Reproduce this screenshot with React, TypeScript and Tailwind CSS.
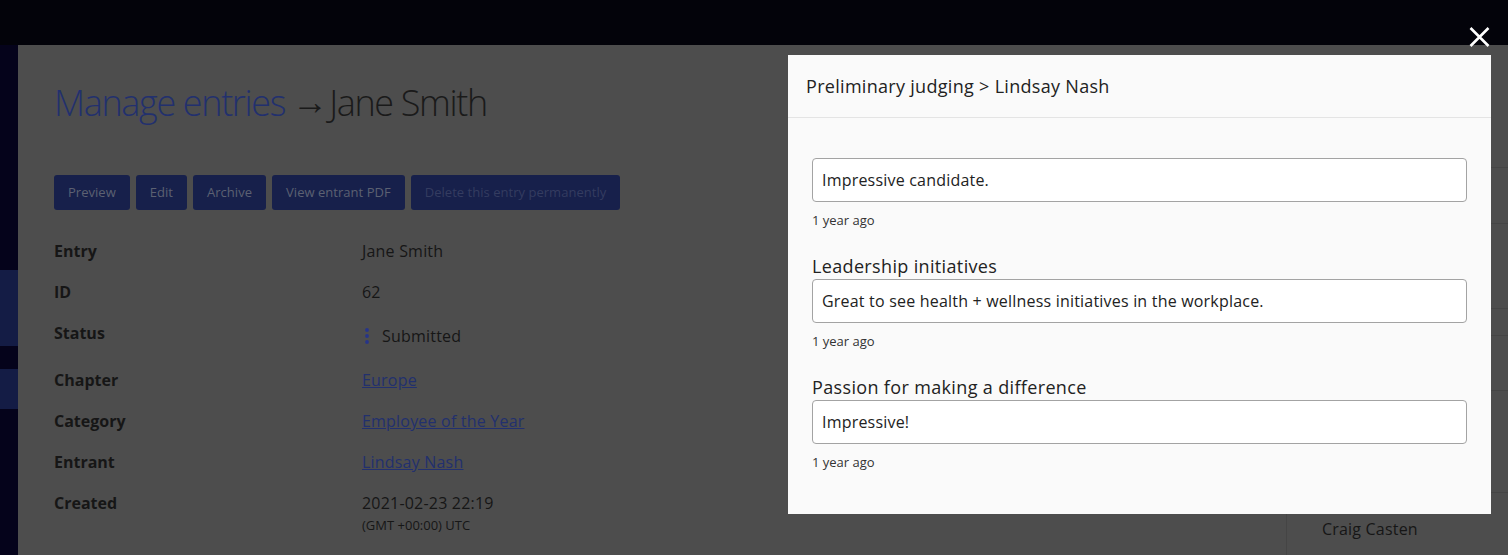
const details = [
  { label: "Entry", value: "Jane Smith" },
  { label: "ID", value: "62" },
];

const links = [
  { label: "Chapter", value: "Europe" },
  { label: "Category", value: "Employee of the Year" },
  { label: "Entrant", value: "Lindsay Nash" },
];

const comments = [
  { title: "", text: "Impressive candidate." },
  { title: "Leadership initiatives", text: "Great to see health + wellness initiatives in the workplace." },
  { title: "Passion for making a difference", text: "Impressive!" },
];

function Btn({ children, disabled }: { children: string; disabled?: boolean }) {
  return (
    <span
      className={`h-[35px] px-[14px] rounded-[3px] bg-[#17204b] flex items-center text-[13px] tracking-[0.03px] ${
        disabled ? "text-[#343c60]" : "text-[#5c6172]"
      }`}
    >
      {children}
    </span>
  );
}

export default function App() {
  return (
    <div className="relative w-[1508px] h-[555px] overflow-hidden bg-[#4d4d4d] font-['Open_Sans',sans-serif]">
      <div className="h-[45px] bg-[#03030a]" />
      <div className="flex h-[510px]">
        {/* sidebar */}
        <div className="w-[18px] bg-[#05031b] flex flex-col">
          <div className="h-[225px]" />
          <div className="h-[76px] bg-[#141c45]" />
          <div className="h-[23px]" />
          <div className="h-[40px] bg-[#141c45]" />
        </div>

        {/* main */}
        <div className="flex-1 pl-[36px] pt-[36px]">
          <h1 className="flex text-[36px] leading-[43px] font-light text-[#1a1a1a] tracking-[-1.35px]">
            <span className="text-[#22306e]">Manage entries</span>
            <span className="ml-[7px] mr-[1px] tracking-normal -translate-y-[2px]">→</span>
            <span>Jane Smith</span>
          </h1>

          <div className="mt-[51px] flex gap-[6px]">
            <Btn>Preview</Btn>
            <Btn>Edit</Btn>
            <Btn>Archive</Btn>
            <Btn>View entrant PDF</Btn>
            <Btn disabled>Delete this entry permanently</Btn>
          </div>

          <div className="mt-[29px] text-[16px] text-[#161616] tracking-[0.2px]">
            {details.map((d) => (
              <div key={d.label} className="flex h-[24px] leading-[24px] mb-[17px]">
                <span className="w-[308px] font-bold tracking-normal">{d.label}</span>
                <span>{d.value}</span>
              </div>
            ))}
            <div className="flex h-[30px] mb-[17px]">
              <span className="w-[308px] font-bold tracking-normal leading-[24px]">Status</span>
              <span className="flex items-center gap-[12px] pl-[2px]">
                <svg width="6" height="16" viewBox="0 0 6 16">
                  <circle cx="3" cy="2" r="1.9" fill="#26348a" />
                  <circle cx="3" cy="8" r="1.9" fill="#26348a" />
                  <circle cx="3" cy="14" r="1.9" fill="#26348a" />
                </svg>
                Submitted
              </span>
            </div>
            {links.map((d) => (
              <div key={d.label} className="flex h-[24px] leading-[24px] mb-[17px]">
                <span className="w-[308px] font-bold tracking-normal">{d.label}</span>
                <a href="#" className="underline text-[#22306e]">
                  {d.value}
                </a>
              </div>
            ))}
            <div className="flex">
              <span className="w-[308px] font-bold tracking-normal leading-[24px]">Created</span>
              <div>
                <div className="leading-[24px]">2021-02-23 22:19</div>
                <div className="text-[13px] leading-[18px] tracking-normal mt-[1px]">(GMT +00:00) UTC</div>
              </div>
            </div>
          </div>
        </div>

        {/* table behind modal */}
        <div className="w-[222px] flex flex-col">
          <div className="h-[123px] border-b border-[#454545]" />
          <div className="h-[56px] border-b border-[#454545]" />
          <div className="h-[85px] border-b border-[#454545]" />
          <div className="h-[27px] border-b border-[#454545]" />
          <div className="h-[55px] border-b border-[#454545]" />
          <div className="h-[102px] border-b border-[#454545]" />
          <div className="flex-1 border-l border-[#454545] pl-[35px] pt-[24px] text-[16px] tracking-[0.2px] text-[#161616]">
            Craig Casten
          </div>
        </div>
      </div>

      {/* close */}
      <button className="absolute left-[1469px] top-[27px] w-[21px] h-[20px]">
        <svg width="21" height="20" viewBox="0 0 21 20">
          <path d="M1.5 1 L19.5 19 M19.5 1 L1.5 19" stroke="#fff" strokeWidth="2.6" />
        </svg>
      </button>

      {/* modal */}
      <div className="absolute left-[788px] top-[55px] w-[703px] h-[459px] bg-[#fafafa] text-[#222]">
        <div className="h-[63px] px-[18px] flex items-center border-b border-[#e4e4e4] text-[18px] tracking-[0.3px]">
          Preliminary judging &gt; Lindsay Nash
        </div>
        <div className="px-[24px] pt-[15px]">
          {comments.map((c) => (
            <div key={c.text} className="mb-[24px]">
              <div className="h-[24px] leading-[24px] text-[18px] tracking-[0.35px] mb-[1px]">{c.title}</div>
              <div className="h-[44px] rounded-[4px] border border-[#a3a3a3] bg-white px-[9px] flex items-center text-[16px] tracking-[0.2px]">
                {c.text}
              </div>
              <div className="mt-[8px] text-[13px] leading-[20px] text-[#333]">1 year ago</div>
            </div>
          ))}
        </div>
      </div>
    </div>
  );
}
